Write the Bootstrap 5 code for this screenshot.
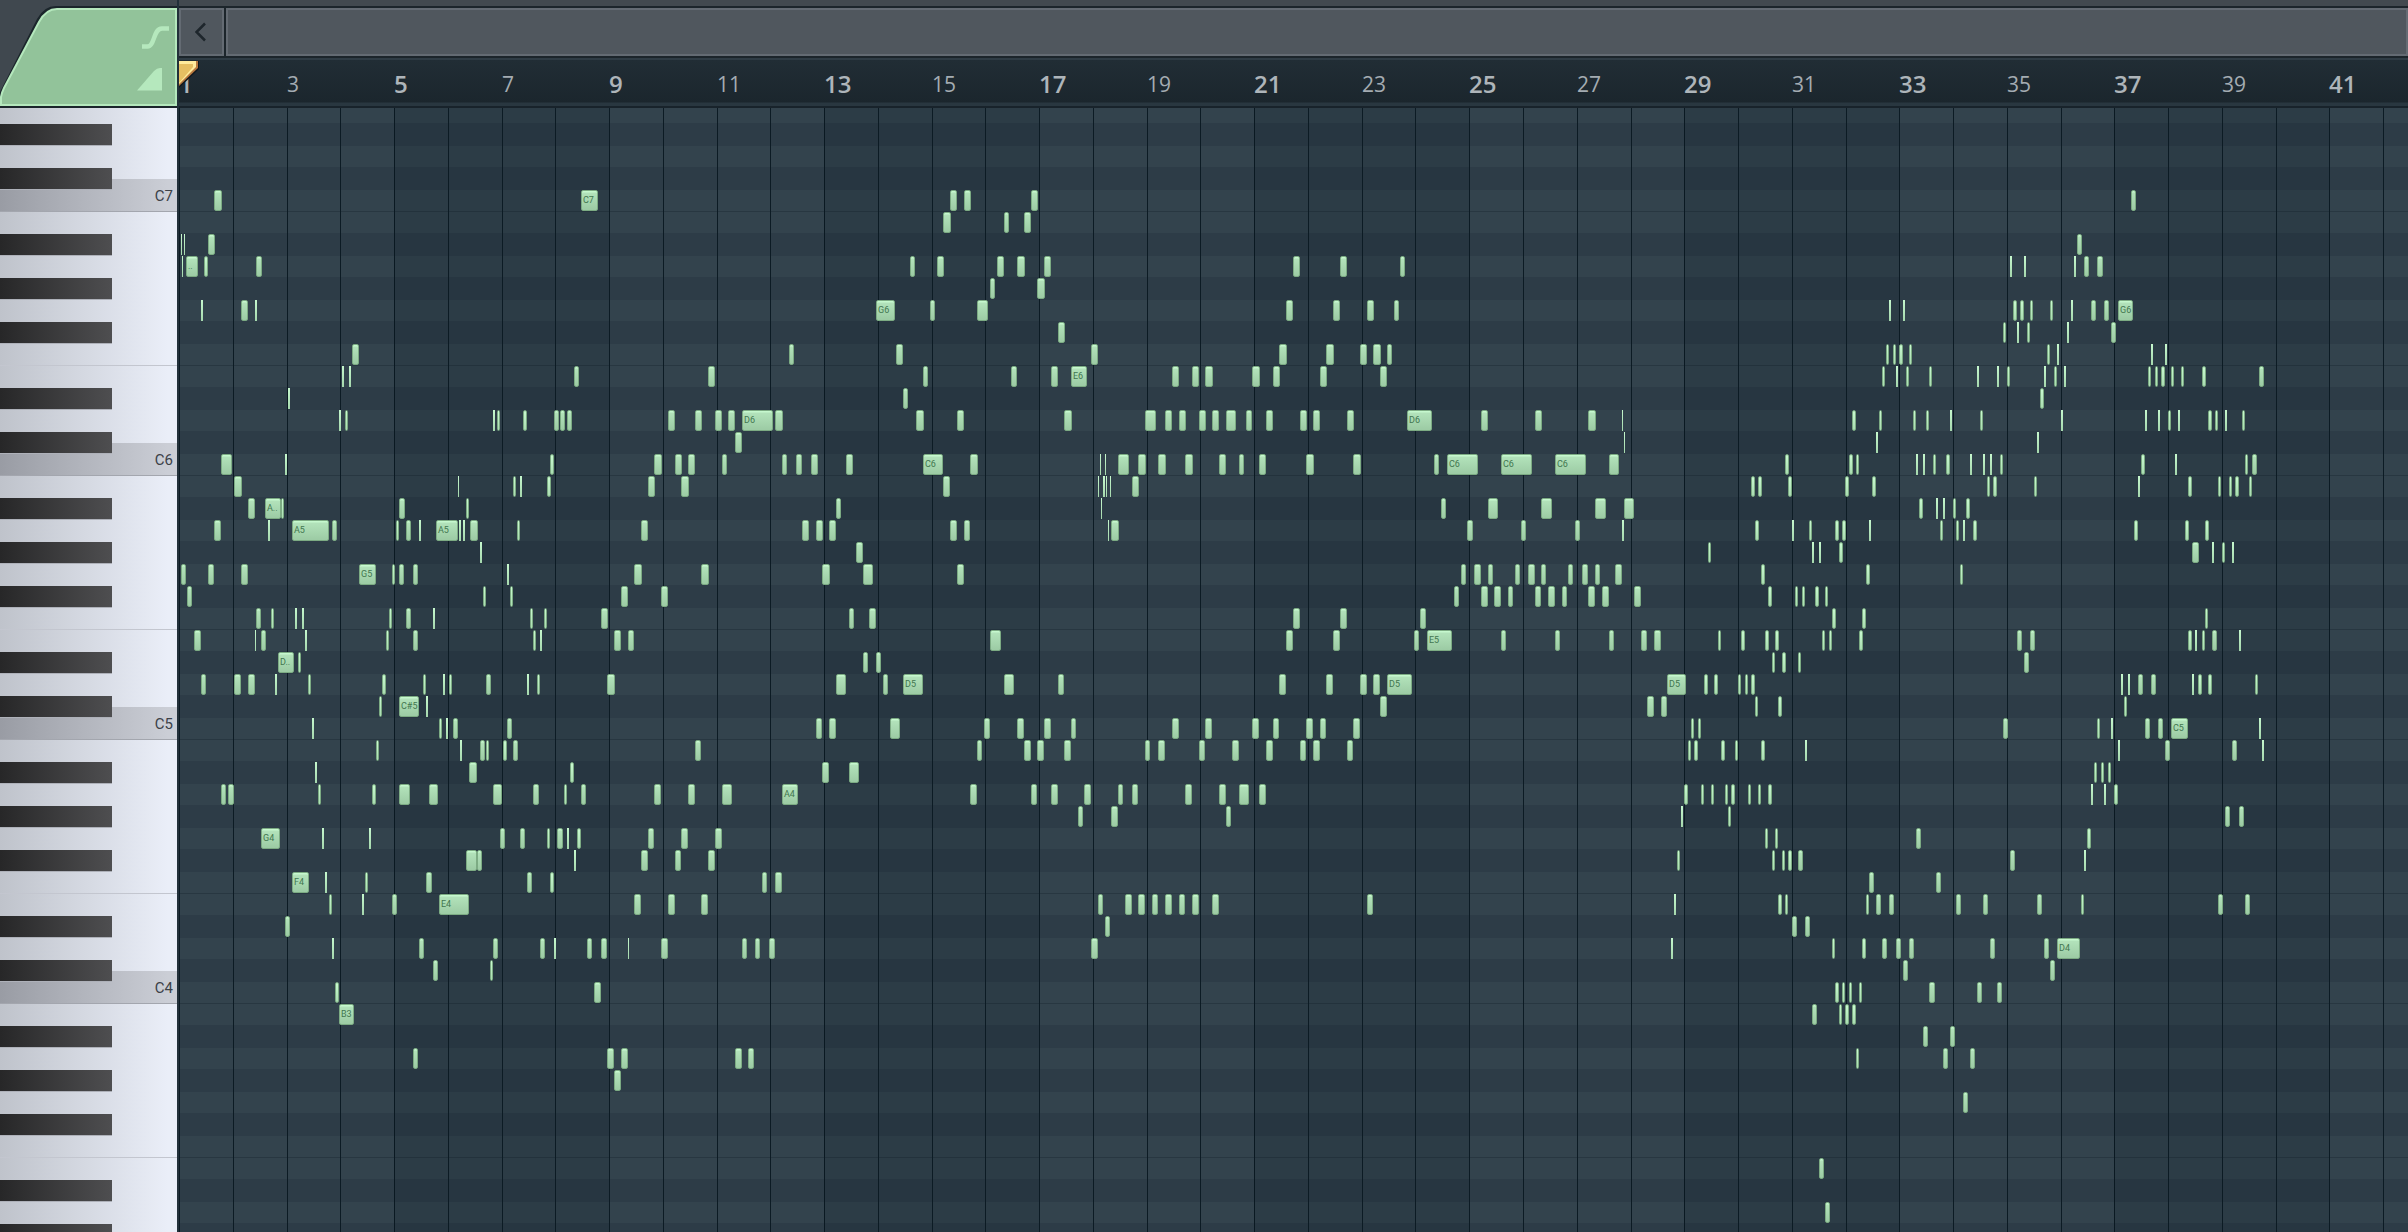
<!DOCTYPE html>
<html lang="en">
<head>
<meta charset="utf-8">
<meta name="viewport" content="width=device-width, initial-scale=1">
<title>Piano roll</title>
<link href="https://cdn.jsdelivr.net/npm/bootstrap@5.3.0/dist/css/bootstrap.min.css" rel="stylesheet">
<style>
  :root { --row: 22px; --keys: 177px; --lit: #b5e8bd; }
  body { background: #40484f; font-family: "Open Sans", "Noto Sans", sans-serif; }
  .roll-head { height: 108px; }
  .key-side { width: var(--keys); }
  .corner-btn { width: var(--keys); height: 108px; border-radius: 0; background: none; }
  .divider { width: 2px; background: #22303a; }

  .scroll-strip { height: 58px; padding-top: 6px; background: linear-gradient(#42494f 0 6px, #1c252b 6px); }
  .scroll-strip > div { margin: 2px 0; gap: 2px; }
  .strip-piece { background: #50575e; border: 2px solid #646b73; border-radius: 0; }
  .back-btn { width: 45px; }
  .ruler { height: 50px; background: linear-gradient(#2f3c45 0 2px, #212d35 2px, #1b262d 44px, #293740 45px 48px, #18232b 48px); }
  .bar-no { color: #a4acb2; font-size: 21px; line-height: 28px; top: 12px; }
  .bar-no.major { font-size: 24px; font-weight: 600; color: #aeb5ba; }
  .playhead { top: 2px; left: 0; }

  .key-row, .lane { height: var(--row); }
  .key-row:first-child, .lane:first-child { height: 16px; }
  .key-row { background: linear-gradient(90deg, #bfc3cb, #eaeef8 95%); border-bottom: 0 solid #c3c6cf; }
  .key-row.edge { border-bottom-width: 1px; }
  .key-row.tonic { background: linear-gradient(90deg, #999ca4, #cbced6 95%); border-bottom: 1px solid #a3a6ae; }
  .key-row.above-tonic { background: linear-gradient(90deg, #bfc3cb, #eaeef8 95%) top / 100% 11px no-repeat, linear-gradient(90deg, #999ca4, #cbced6 95%); }
  .key-black { width: 112px; height: var(--row); background: linear-gradient(90deg, #272728, #4e4e50); border-bottom: 1px solid #aeb1b9; }
  .key-name { font: 15px/12px Roboto, sans-serif; color: #3c4148; padding-right: 4px; }

  .canvas { background: #0f1f28; }
  .lane { background: #33434d; }
  .lane.dark { background: #2d3c47; box-shadow: 0 -1px #2d3c47; }
  .lane.edge { border-bottom: 1px solid #283741; }
  .bar-line { width: 1px; background: #0c1b24; }
  .shade { background: rgba(4, 14, 22, .12); }

  .note { height: 21px; overflow: hidden; border: 1px solid #7cab83; border-radius: 2px;
          background: linear-gradient(#c6f8ce 0 1px, #b2e2ba 2px, #9ccba4);
          font: 9px/19px Roboto, "Liberation Sans", sans-serif; color: #42764f; white-space: nowrap; padding-left: 1px; box-sizing: border-box; }
  .note.thin { border: 0; border-radius: 0; padding: 0; background: linear-gradient(#c6f8ce, #a5d8ad); }
  .note.slim { padding: 0; background: linear-gradient(#c9fad1, #a9dcb1); }
</style>
<script src="https://cdn.jsdelivr.net/npm/bootstrap@5.3.0/dist/js/bootstrap.bundle.min.js"></script>
</head>
<body class="vh-100 d-flex flex-column overflow-hidden">

<header class="roll-head d-flex flex-shrink-0">
  <button class="corner-btn btn p-0 border-0 flex-shrink-0" type="button" aria-label="Velocity and slide options">
    <svg class="d-block" width="177" height="108" viewBox="0 0 177 108" aria-hidden="true">
      <path d="M0 108V92L37 19Q44 6 56 6H177V108Z" fill="#1b252b"/>
      <path d="M1 105V97Q2 92 4 88L39 22Q46 9 57 9H176V105Z" fill="#92c39a" stroke="#b5e8bd" stroke-width="2"/>
      <path d="M142 46.500H147.500C155 46.500 153 28.500 162 28.500H169" fill="none" stroke="#b5e8bd" stroke-width="4.500"/>
      <path d="M137 90.500L154 71Q157 68 160 68H162V90.500Z" fill="#b5e8bd"/>
    </svg>
  </button>
  <div class="divider flex-shrink-0"></div>
  <div class="flex-grow-1 d-flex flex-column">
    <div class="scroll-strip d-flex">
      <div class="d-flex flex-grow-1">
        <button class="back-btn strip-piece btn p-0 flex-shrink-0 d-flex align-items-center justify-content-center" type="button" aria-label="Scroll back">
          <svg width="14" height="20" viewBox="0 0 14 20" aria-hidden="true"><path d="M10 1.500L1.500 10L10 18.500" fill="none" stroke="#1e262c" stroke-width="2.500"/></svg>
        </button>
        <div class="strip-piece flex-grow-1"></div>
      </div>
    </div>
    <div class="ruler position-relative overflow-hidden" id="ruler">
      <svg class="playhead position-absolute z-1" width="22" height="30" viewBox="0 0 22 30" aria-hidden="true">
        <path d="M0 1H20V9L0 28Z" fill="#10181d"/>
        <path d="M0 1H19V8L0 26Z" fill="#b9793f"/>
        <path d="M0 1H17V7L0 24Z" fill="#ffeb9c"/>
        <path d="M0 4H14V7L0 23Z" fill="#e6bf62"/>
      </svg>
    </div>
  </div>
</header>

<main class="d-flex flex-grow-1 overflow-hidden">
  <div class="key-side flex-shrink-0" id="keys"></div>
  <div class="divider flex-shrink-0"></div>
  <div class="canvas flex-grow-1 position-relative overflow-hidden" id="canvas"></div>
</main>

<script>
// Pitches run down from E7 (100). Times are in ticks, three ticks to a pixel.
const TOP_PITCH = 100, LANES = 52, ROW = 22, FIRST = 16, BAR = 161.28 / 3, C7 = 96;
const BLACK = [1, 3, 6, 8, 10];

// Each clip: start tick, then one line per lane, counted down from C7:
// "lane: tick,width[label] ..."
const clips = [
[-27, `0:132,8
2:33,1 42,1 114,7
3:36,1 48,12.. 102,4 258,6
5:93,2 213,7 255,2
7:546,7
8:516,2 537,2 1212,5
9:354,2
10:507,2 525,3 969,2 981,3 1059,4 1152,5 1170,5 1191,5
12:153,11 345,2 1140,4
13:192,8 864,1 1029,3 1050,2 1131,4
14:234,7 285,16A.. 333,3 687,6 888,3
15:132,7 294,2 366,37A5 486,5 678,3 708,5 747,2 798,22A5 867,2 879,2 900,8 1041,3
16:930,2
17:33,5 114,6 213,7 567,17G5 666,3 687,5 729,5 1011,2
18:51,5 939,3 1020,3
19:258,5 303,3 375,2 396,2 657,3 708,5 789,2 1080,3 1122,3
20:72,7 255,1 273,5 405,2 648,3 729,5 1089,3 1110,2
21:324,16D.. 384,3
22:93,5 192,7 234,7 315,2 414,3 636,4 759,3 819,2 837,3 948,5 1071,2 1101,3
23:627,3 687,20C#5 768,2
24:426,2 807,3 828,2 849,5 1011,5
25:618,3 870,2 930,5 948,3 999,4 1029,5
26:435,2 897,8 1200,4
27:153,5 174,6 444,3 606,4 687,11 777,9 969,9 1089,6 1182,3 1233,5
29:273,19G4 456,2 597,2 990,5 1050,5 1131,3 1161,6 1191,2 1221,4
30:888,11 921,5 1212,2
31:366,17F4 465,2 585,3 768,6 1071,5 1140,4
32:477,3 576,2 666,5 807,30E4
33:345,5
34:486,2 747,5 969,5 1110,5 1152,2
35:789,5 960,3
36:495,4
37:507,15B3
39:729,5`],
[1203, `0:3,17C7 1110,7 1152,7
1:1089,8 1272,5
3:990,5 1071,7 1251,7
4:1230,5
5:888,19G6 1050,5 1191,11
7:627,5 948,7
8:384,7 1029,5 1293,6
9:969,5
10:264,7 345,7 405,7 444,7 486,31D6 585,8 1008,8 1131,7
11:465,7
12:222,8 285,7 324,7 426,5 606,5 648,6 693,7 798,7 1029,20C6 1170,8
13:204,7 303,8 1089,7
14:768,5
15:183,7 666,7 708,7 747,7 1110,7 1152,6
16:828,7
17:162,8 363,8 726,8 849,10 1131,7
18:123,7 243,7
19:63,7 807,5 867,7
20:102,7 144,6 1230,11
21:849,5 888,5
22:81,8 768,10 909,5 969,20D5 1272,10
24:708,6 747,7 930,10 1212,6
25:345,6 1191,5
26:726,7 807,10
27:222,7 324,7 426,10 606,16A4 1170,7
29:204,6 303,7 405,7
30:183,7 285,6 384,7
31:546,5 585,7
32:162,7 264,7 363,7
34:21,5 63,6 144,1 243,7 486,5 525,5 567,6
36:42,7
39:81,7 123,7 465,7 504,6
40:102,7`],
[2493, `0:63,7
1:42,7
3:21,8 102,7 849,7 990,7 1170,5
4:81,8
5:828,7 969,7 1071,7 1152,5
6:144,7
7:243,7 807,8 948,8 1050,7 1089,8 1131,5
8:123,7 183,16E6 486,7 546,7 585,8 726,8 789,7 930,7 1110,7
10:162,8 405,11 465,7 507,7 567,7 606,7 648,10 708,6 768,7 870,7 909,7 1011,7 1191,25D6
12:270,1 285,1 324,11 384,8 444,8 525,8 627,7 687,5 747,7 888,8 1029,8 1272,5
13:264,1 279,2 288,1 300,1 366,7
14:273,1 1293,5
15:294,1 303,8
19:849,7 990,7 1230,6
20:828,7 969,7 1212,5 1251,25E5
22:144,6 807,7 948,7 1050,7 1089,7 1131,25D5
23:1110,7
24:21,7 102,7 183,5 486,7 585,7 726,7 789,6 888,7 930,6 1029,7
25:42,7 81,7 162,7 405,5 444,7 567,6 666,7 768,7 870,6 909,7 1011,6
27:63,6 123,7 222,7 324,5 366,6 525,7 627,7 687,10 747,7
28:204,5 303,7 648,5
32:264,5 345,7 384,7 426,6 465,7 507,6 546,7 606,7 1071,6
33:285,5
34:243,7`],
[3783, `10:123,7 285,7 444,8 546,1 1236,4
11:552,1
12:21,31C6 183,31C6 345,31C6 507,10 1035,4 1227,4 1248,3
13:933,4 954,4 1044,4 1215,4
14:144,10 303,11 465,11 552,10
15:81,6 243,5 405,5 546,2 945,4 1056,2 1107,3 1185,4 1206,4
16:804,3 1116,2 1137,2 1197,4
17:63,5 102,7 144,5 225,5 264,7 303,5 384,5 426,6 465,5 525,7 963,4
18:42,5 123,7 162,7 204,5 285,6 324,7 366,5 444,7 486,7 582,7 984,4 1065,3 1086,3 1125,4 1155,3
19:1176,4
20:183,5 345,5 507,5 603,6 642,7 834,3 903,4 975,4 1005,4 1146,3 1167,3 1257,4
21:996,3 1026,4 1074,3
22:681,19D5 792,4 822,4 894,3 915,3 933,4
23:621,7 663,6 945,3 1014,4
24:753,3 774,3
25:744,3 762,4 843,4 885,3 963,4 1095,2
27:732,4 783,3 813,3 855,3 873,4 924,3 954,3 984,4
28:723,2 864,3
29:975,3 1005,3
30:711,3 996,3 1026,3 1044,4 1074,5`],
[4383, `29:828,5 1341,4
30:1110,5 1332,2
31:687,5 888,5
32:102,2 414,4 435,3 678,3 708,5 747,5 948,5 1029,5 1191,5 1323,3
33:456,5 495,5
34:93,2 576,3 666,4 726,5 768,5 807,5 1050,5 1212,5 1251,23D4
35:789,5 1230,5
36:585,4 606,3 627,3 657,3 867,6 1011,5 1071,5
37:516,5 597,3 615,4 636,4
38:849,5 930,5
39:648,3 909,5 990,5
41:969,5
44:537,5
46:555,5`],
[5043, `0:813,5
2:651,5
3:450,2 492,2 642,2 672,5 711,6
5:87,2 129,2 459,4 480,4 510,3 570,3 633,2 693,5 732,5 774,15G6
6:429,3 471,2 501,3 621,2 753,5
7:78,3 99,3 117,4 147,3 561,3 591,2 873,2 915,2
8:66,3 108,2 138,3 207,3 351,2 411,2 441,3 552,2 582,3 612,2 864,3 885,3 903,4 933,3 963,3 1026,4 1197,5
9:540,4
10:57,3 159,3 198,3 270,2 360,3 603,2 855,2 894,2 924,3 954,2 1044,4 1065,3 1095,2 1146,3
11:48,2 531,2
12:168,2 189,2 219,3 258,4 330,2 369,2 390,2 420,3 843,4 945,2 1155,3 1176,5
13:36,4 381,3 399,4 522,3 834,2 984,4 1074,3 1107,3 1125,4 1167,3
14:177,4 228,2 249,2 279,3 318,4
15:27,2 240,3 288,3 309,2 339,4 822,4 975,4 1035,4
16:996,7 1056,2 1086,3 1116,2
17:18,4 300,3
19:6,4 1035,3
20:471,5 510,5 984,4 1005,2 1026,3 1056,5 1137,2
21:492,5
22:783,2 804,2 834,5 873,5 996,2 1014,4 1044,4 1185,3
23:792,3
24:429,5 711,3 753,2 855,5 894,5 933,17C5 1197,2
25:774,2 915,5 1116,5 1206,2
26:702,3 723,3 744,3
27:693,2 732,2 762,4
28:1095,5 1137,5
32:1074,5 1155,5`]
];

const el = (cls, text) => {
  const d = document.createElement('div');
  d.className = cls;
  if (text) d.textContent = text;
  return d;
};
const keys = document.getElementById('keys');
const canvas = document.getElementById('canvas');
const ruler = document.getElementById('ruler');

for (let i = 0; i < LANES; i++) {
  const pitch = TOP_PITCH - i, step = pitch % 12;
  const black = BLACK.includes(step), edge = step === 0 || step === 5;
  const key = el('key-row d-flex justify-content-end' + (edge ? ' edge' : '') +
    (step === 0 ? ' tonic' : '') + (step === 1 ? ' above-tonic' : ''));
  if (black) key.append(el('key-black me-auto'));
  if (step === 0) key.append(el('key-name', 'C' + (pitch / 12 - 1)));
  keys.append(key);
  canvas.append(el('lane' + (black ? ' dark' : '') + (edge ? ' edge' : '')));
}

for (let k = 0; k <= 60; k++) {
  const x = Math.round(k * BAR);
  const line = el('bar-line position-absolute top-0 bottom-0');
  line.style.left = x + 'px';
  canvas.append(line);
  if (k % 8 === 4) {
    const s = el('shade position-absolute top-0 bottom-0');
    s.style.left = x + 'px';
    s.style.width = Math.round((k + 4) * BAR) - x + 'px';
    canvas.append(s);
  }
  if (k % 2 === 0 && k <= 40) {
    const n = el('bar-no position-absolute' + (k % 4 === 0 ? ' major' : ''), String(k + 1));
    n.style.left = x + 'px';
    ruler.append(n);
  }
}

for (const [start, lines] of clips) {
  for (const line of lines.split('\n')) {
    const [lane, items] = line.split(':');
    const top = FIRST + (TOP_PITCH - C7 - 1 + Number(lane)) * ROW;
    for (const item of items.split(' ')) {
      const [, tick, width, label] = item.match(/^(\d+),(\d+)(.*)$/);
      const w = Number(width);
      const note = el('note position-absolute' + (w < 3 ? ' thin' : w < 5 ? ' slim' : ''), label);
      note.style.left = Math.round((start + Number(tick)) / 3) + 'px';
      note.style.top = top + 'px';
      note.style.width = w + 'px';
      canvas.append(note);
    }
  }
}
</script>
</body>
</html>
